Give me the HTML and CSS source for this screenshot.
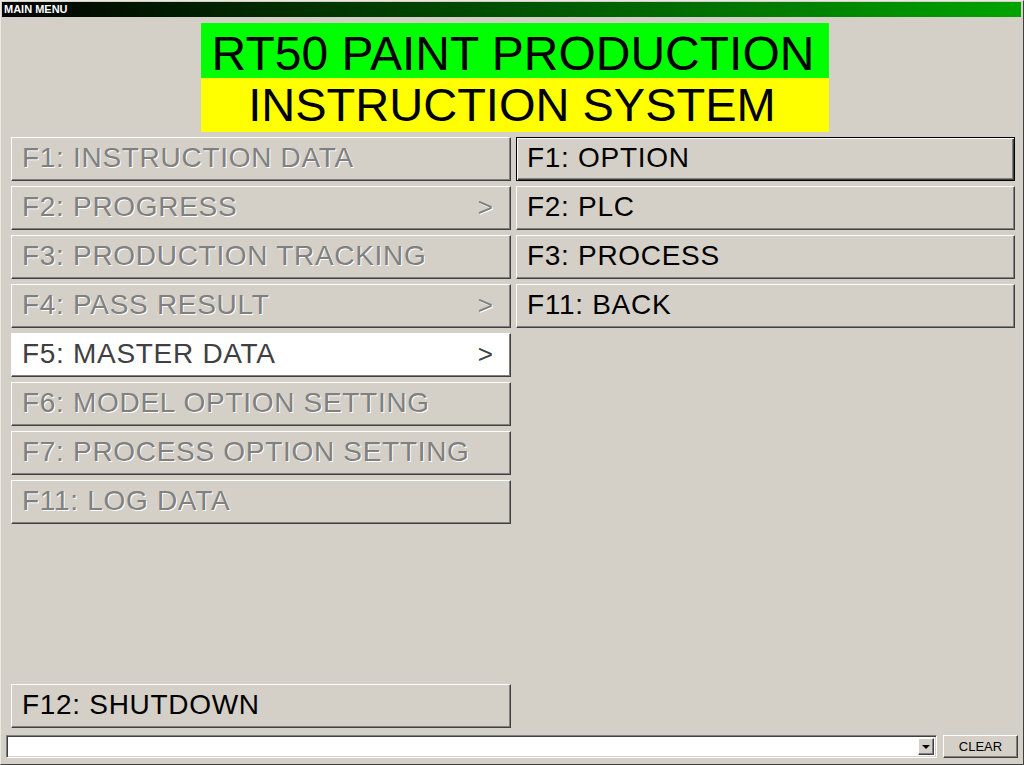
FILE: index.html
```html
<!DOCTYPE html>
<html>
<head>
<meta charset="utf-8">
<link rel="stylesheet" href="styles.css">
</head>
<body>
<div class="window">
  <div class="titlebar">MAIN MENU</div>
  <div class="content">
    <div class="banner">
      <div class="banner-line green">RT50 PAINT PRODUCTION</div>
      <div class="banner-line yellow">INSTRUCTION SYSTEM</div>
    </div>
    <div class="menus">
      <div class="col">
        <div class="btn disabled"><span>F1: INSTRUCTION DATA</span></div>
        <div class="btn disabled"><span>F2: PROGRESS</span><span class="arrow">&gt;</span></div>
        <div class="btn disabled"><span>F3: PRODUCTION TRACKING</span></div>
        <div class="btn disabled"><span>F4: PASS RESULT</span><span class="arrow">&gt;</span></div>
        <div class="btn selected"><span>F5: MASTER DATA</span><span class="arrow">&gt;</span></div>
        <div class="btn disabled"><span>F6: MODEL OPTION SETTING</span></div>
        <div class="btn disabled"><span>F7: PROCESS OPTION SETTING</span></div>
        <div class="btn disabled"><span>F11: LOG DATA</span></div>
        <div class="spacer"></div>
        <div class="btn"><span>F12: SHUTDOWN</span></div>
      </div>
      <div class="col">
        <div class="btn focused"><span>F1: OPTION</span></div>
        <div class="btn"><span>F2: PLC</span></div>
        <div class="btn"><span>F3: PROCESS</span></div>
        <div class="btn"><span>F11: BACK</span></div>
      </div>
    </div>
    <div class="statusbar">
      <div class="combo">
        <div class="combo-field"></div>
        <div class="combo-drop"><span class="tri"></span></div>
      </div>
      <div class="clear-btn">CLEAR</div>
    </div>
  </div>
</div>
</body>
</html>
```

FILE: styles.css
```css
html, body {
  margin: 0;
  padding: 0;
  background: #d4d0c8;
}
.window {
  width: 1024px;
  height: 765px;
  box-sizing: border-box;
  border: 1px solid;
  border-color: #ece9e2 #404040 #404040 #ece9e2;
  padding: 1px;
  background: #d4d0c8;
  display: flex;
  flex-direction: column;
  font-family: "Liberation Sans", Arial, sans-serif;
}
.titlebar {
  height: 15px;
  flex: none;
  background: linear-gradient(to right, #000000, #00a400);
  color: #fff;
  font-weight: bold;
  font-size: 11px;
  line-height: 15px;
  padding-left: 2px;
  margin-right: 1px;
}
.content {
  flex: 1;
  display: flex;
  flex-direction: column;
  padding: 6px 0 5px 0;
}
.banner {
  width: 628px;
  margin-left: 199px;
  flex: none;
}
.banner-line {
  text-align: center;
  color: #000;
  box-sizing: border-box;
  white-space: nowrap;
}
.green {
  background: #00ff00;
  font-size: 48px;
  height: 55px;
  line-height: 49px;
  padding: 6px 4px 0 0;
}
.yellow {
  background: #ffff00;
  font-size: 47px;
  height: 54px;
  line-height: 54px;
  padding: 0 6px 0 0;
}
.menus {
  flex: 1;
  display: grid;
  grid-template-columns: 500px 499px;
  column-gap: 5px;
  padding-left: 9px;
  margin-top: 5px;
}
.col {
  display: flex;
  flex-direction: column;
  gap: 5px;
}
.spacer {
  flex: 1;
}
.btn {
  height: 44px;
  flex: none;
  box-sizing: border-box;
  border: 1px solid;
  border-color: #ffffff #404040 #404040 #ffffff;
  box-shadow: inset -1px -1px 0 #808080;
  background: #d4d0c8;
  display: flex;
  align-items: center;
  justify-content: space-between;
  padding: 0 17px 2px 10px;
  font-size: 28px;
  letter-spacing: 0.7px;
  color: #000;
  white-space: nowrap;
}
.btn.disabled {
  color: #808080;
  text-shadow: 1px 1px 0 #ffffff;
}
.btn.selected {
  background: #ffffff;
  color: #404040;
}
.btn.focused {
  border-color: #000;
  box-shadow: inset 1px 1px 0 #ffffff, inset -1px -1px 0 #404040, inset -2px -2px 0 #808080;
}
.arrow {
  font-size: 26px;
  letter-spacing: 0;
}
.statusbar {
  flex: none;
  height: 23px;
  margin-top: 7px;
  display: flex;
  align-items: center;
  padding-left: 4px;
  gap: 6px;
}
.combo {
  width: 931px;
  height: 23px;
  box-sizing: border-box;
  border: 1px solid;
  border-color: #808080 #ffffff #ffffff #808080;
  box-shadow: inset 1px 1px 0 #404040, inset -1px -1px 0 #d4d0c8;
  background: #fff;
  display: flex;
  padding: 2px;
}
.combo-field {
  flex: 1;
}
.combo-drop {
  width: 16px;
  box-sizing: border-box;
  background: #d4d0c8;
  border: 1px solid;
  border-color: #ffffff #404040 #404040 #ffffff;
  box-shadow: inset -1px -1px 0 #808080;
  display: flex;
  align-items: center;
  justify-content: center;
}
.tri {
  width: 0;
  height: 0;
  border-left: 4px solid transparent;
  border-right: 4px solid transparent;
  border-top: 4px solid #000;
}
.clear-btn {
  width: 75px;
  height: 23px;
  box-sizing: border-box;
  border: 1px solid;
  border-color: #ffffff #404040 #404040 #ffffff;
  box-shadow: inset -1px -1px 0 #808080;
  background: #d4d0c8;
  font-size: 13px;
  display: flex;
  align-items: center;
  justify-content: center;
  color: #000;
}
```
